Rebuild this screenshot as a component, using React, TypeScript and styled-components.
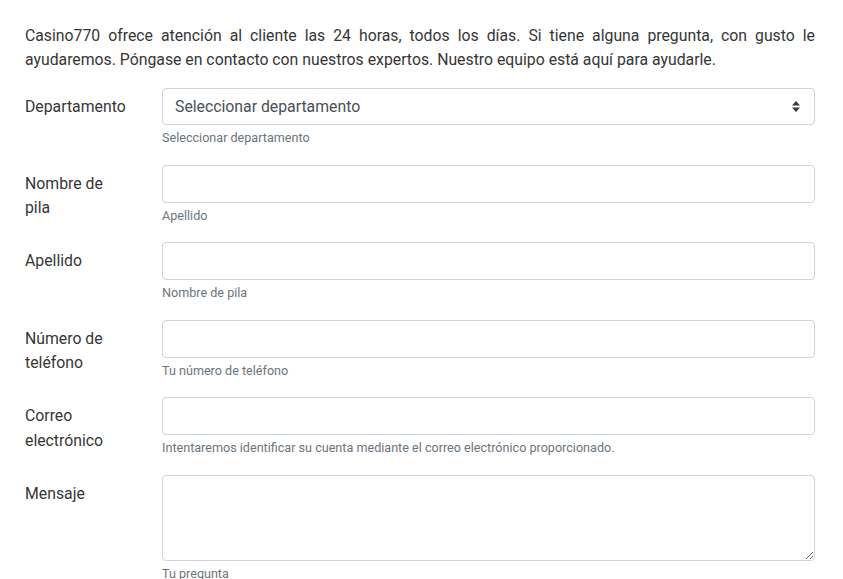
import React from "react"
import styled, { createGlobalStyle } from "styled-components"

const GlobalStyle = createGlobalStyle`
  html, body {
    margin: 0;
    padding: 0;
    background: #fff;
  }
  body {
    font-family: Roboto, "Liberation Sans", sans-serif;
    color: #333;
  }
`

const Page = styled.div`
  padding: 24px 28px 0 25px;
`

const Intro = styled.p`
  margin: 0 0 16px;
  font-size: 15.8px;
  line-height: 24px;
  text-align: justify;
  color: #363636;
`

const Row = styled.div`
  display: flex;
  align-items: flex-start;
  margin-bottom: 17.5px;
`

const Label = styled.label`
  flex: 0 0 137px;
  box-sizing: border-box;
  padding: 7px 35px 0 0;
  font-size: 15.8px;
  line-height: 24.5px;
  color: #363636;
`

const Field = styled.div`
  flex: 1;
  display: flex;
  flex-direction: column;
`

const Input = styled.input`
  box-sizing: border-box;
  width: 100%;
  height: 38px;
  border: 1px solid #ced4da;
  border-radius: 4px;
  padding: 0 12px;
  font: inherit;
  font-size: 15.8px;
  color: #495057;
  background: #fff;
  outline: none;
`

const SelectBox = styled.div`
  box-sizing: border-box;
  height: 37px;
  border: 1px solid #ced4da;
  border-radius: 4px;
  padding: 0 14px 0 12px;
  display: flex;
  align-items: center;
  justify-content: space-between;
  font-size: 15.8px;
  color: #495057;
`

const TextArea = styled.textarea`
  box-sizing: border-box;
  width: 100%;
  height: 86px;
  border: 1px solid #ced4da;
  border-radius: 4px;
  padding: 6px 12px;
  font: inherit;
  color: #495057;
  outline: none;
  resize: vertical;
  display: block;
`

const Help = styled.small`
  display: block;
  margin-top: 4px;
  font-size: 12.6px;
  line-height: 18px;
  color: #6c757d;
`

const Arrows = () => (
  <svg width="8" height="11" viewBox="0 0 8 11">
    <path d="M4 0 L8 4.5 L0 4.5 Z M0 6.5 L8 6.5 L4 11 Z" fill="#343a40" />
  </svg>
)

type FieldProps = { label: React.ReactNode; help: string }

const TextRow: React.FC<FieldProps> = ({ label, help }) => (
  <Row>
    <Label>{label}</Label>
    <Field>
      <Input type="text" />
      <Help>{help}</Help>
    </Field>
  </Row>
)

export default function App() {
  return (
    <>
      <GlobalStyle />
      <Page>
        <Intro>
          Casino770 ofrece atención al cliente las 24 horas, todos los días. Si tiene alguna pregunta, con gusto le
          ayudaremos. Póngase en contacto con nuestros expertos. Nuestro equipo está aquí para ayudarle.
        </Intro>
        <Row>
          <Label>Departamento</Label>
          <Field>
            <SelectBox>
              <span>Seleccionar departamento</span>
              <Arrows />
            </SelectBox>
            <Help>Seleccionar departamento</Help>
          </Field>
        </Row>
        <TextRow label="Nombre de pila" help="Apellido" />
        <TextRow label="Apellido" help="Nombre de pila" />
        <TextRow label="Número de teléfono" help="Tu número de teléfono" />
        <TextRow
          label="Correo electrónico"
          help="Intentaremos identificar su cuenta mediante el correo electrónico proporcionado."
        />
        <Row>
          <Label>Mensaje</Label>
          <Field>
            <TextArea />
            <Help>Tu pregunta</Help>
          </Field>
        </Row>
      </Page>
    </>
  )
}
